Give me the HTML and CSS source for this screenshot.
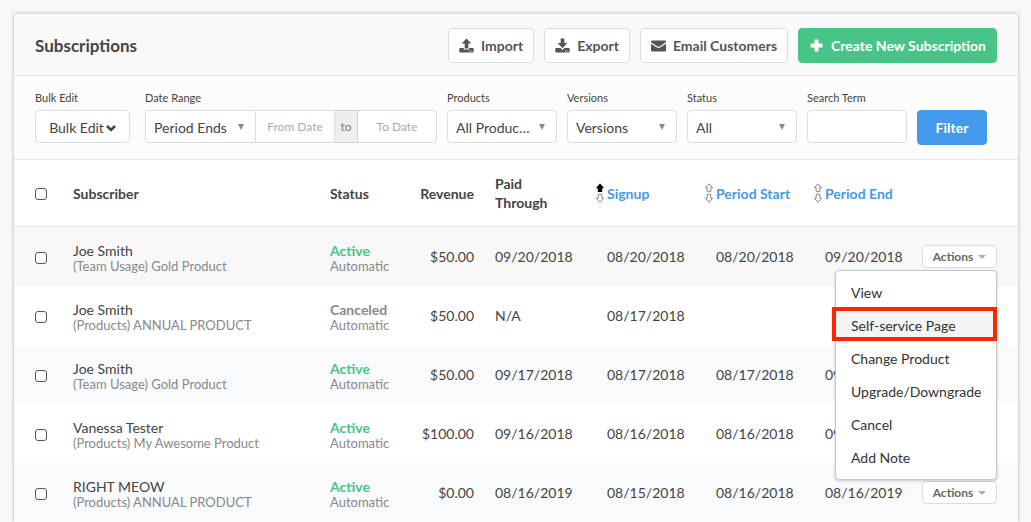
FILE: index.html
```html
<!DOCTYPE html>
<html lang="en">
  <head>
    <meta charset="UTF-8" />
    <meta name="viewport" content="width=device-width, initial-scale=1.0" />
    <title>Subscriptions</title>
    <link rel="stylesheet" href="styles.css">
  </head>
  <body>
    <svg class="sprite" aria-hidden="true">
      <symbol id="icon-up" viewBox="0 0 15 15">
        <path d="M7.500 0.500L12.300 5.500H9.300V10.500H5.700V5.500H2.700Z" />
        <path d="M1 10H4.800V11.500H10.200V10H14Q14.700 10 14.700 11V13.800Q14.700 14.500 14 14.500H1Q0.300 14.500 0.300 13.800V11Q0.300 10 1 10ZM10 12.500V13.500H11V12.500ZM12.300 12.500V13.500H13.300V12.500Z" fill-rule="evenodd" />
      </symbol>
      <symbol id="icon-down" viewBox="0 0 15 15">
        <path d="M5.700 0.500H9.300V5H12.300L7.500 10.200L2.700 5H5.700Z" />
        <path d="M1 10H5.500L7.500 12L9.500 10H14Q14.700 10 14.700 11V13.800Q14.700 14.500 14 14.500H1Q0.300 14.500 0.300 13.800V11Q0.300 10 1 10ZM10 12.500V13.500H11V12.500ZM12.300 12.500V13.500H13.300V12.500Z" fill-rule="evenodd" />
      </symbol>
      <symbol id="icon-mail" viewBox="0 0 15 15">
        <path d="M1 2.500H14Q15 2.500 15 3.500V4.300L8.500 8.500Q7.500 9.100 6.500 8.500L0 4.300V3.500Q0 2.500 1 2.500Z" />
        <path d="M0 5.700L6 9.600Q7.500 10.400 9 9.600L15 5.700V12.500Q15 13.500 14 13.500H1Q0 13.500 0 12.500Z" />
      </symbol>
      <symbol id="icon-plus" viewBox="0 0 15 15">
        <path d="M5.500 1.500H9.500V5.500H13.500V9.500H9.500V13.500H5.500V9.500H1.500V5.500H5.500Z" />
      </symbol>
      <symbol id="icon-chevron" viewBox="0 0 10 8">
        <path d="M1 2L5 6L9 2" fill="none" stroke="currentColor" stroke-width="2.500" />
      </symbol>
      <symbol id="icon-sort" viewBox="0 0 10 20">
        <path class="sort-up" d="M5 0.800L8.700 4.800H6.800V8.700H3.200V4.800H1.300Z" />
        <path class="sort-down" d="M5 19.200L8.700 15.200H6.800V11.300H3.200V15.200H1.300Z" />
      </symbol>
      <symbol id="icon-sorted" viewBox="0 0 10 20">
        <path d="M5 0.500L9.200 5.200H7.200V9H2.800V5.200H0.800Z" fill="#000" />
        <path class="sort-down" d="M5 19.200L8.700 15.200H6.800V11.300H3.200V15.200H1.300Z" />
      </symbol>
    </svg>

    <main class="panel">
      <header class="panel-header">
        <h1>Subscriptions</h1>
        <div class="toolbar">
          <button class="btn" type="button"><svg class="icon"><use href="#icon-up" /></svg>Import</button>
          <button class="btn" type="button"><svg class="icon"><use href="#icon-down" /></svg>Export</button>
          <button class="btn" type="button"><svg class="icon"><use href="#icon-mail" /></svg>Email Customers</button>
          <button class="btn btn-green" type="button"><svg class="icon"><use href="#icon-plus" /></svg>Create New Subscription</button>
        </div>
      </header>

      <form class="filters">
        <div class="field field-bulk">
          <label for="bulk">Bulk Edit</label>
          <button class="control bulk" id="bulk" type="button">Bulk Edit<svg class="chevron"><use href="#icon-chevron" /></svg></button>
        </div>
        <div class="field">
          <label for="range">Date Range</label>
          <div class="range">
            <div class="select">
              <select class="control" id="range"><option>Period Ends</option></select>
            </div>
            <input class="control date" type="text" placeholder="From Date" aria-label="From Date" />
            <span class="range-to">to</span>
            <input class="control date" type="text" placeholder="To Date" aria-label="To Date" />
          </div>
        </div>
        <div class="field">
          <label for="products">Products</label>
          <div class="select">
            <select class="control" id="products"><option>All Products</option></select>
          </div>
        </div>
        <div class="field">
          <label for="versions">Versions</label>
          <div class="select">
            <select class="control" id="versions"><option>Versions</option></select>
          </div>
        </div>
        <div class="field">
          <label for="status">Status</label>
          <div class="select">
            <select class="control" id="status"><option>All</option></select>
          </div>
        </div>
        <div class="field">
          <label for="search">Search Term</label>
          <input class="control search" id="search" type="text" />
        </div>
        <button class="btn btn-blue" type="submit">Filter</button>
      </form>

      <table>
        <colgroup>
          <col class="col-check" />
          <col />
          <col class="col-status" />
          <col class="col-revenue" />
          <col class="col-paid" />
          <col class="col-date" />
          <col class="col-date" />
          <col class="col-date" />
          <col class="col-actions" />
        </colgroup>
        <thead>
          <tr>
            <th class="check"><input type="checkbox" aria-label="Select all" /></th>
            <th>Subscriber</th>
            <th>Status</th>
            <th class="revenue">Revenue</th>
            <th>Paid Through</th>
            <th><a class="sort" href="#"><svg><use href="#icon-sorted" /></svg>Signup</a></th>
            <th><a class="sort" href="#"><svg><use href="#icon-sort" /></svg>Period Start</a></th>
            <th><a class="sort" href="#"><svg><use href="#icon-sort" /></svg>Period End</a></th>
            <th></th>
          </tr>
        </thead>
        <tbody>
          <tr class="current">
            <td class="check"><input type="checkbox" aria-label="Select Joe Smith" /></td>
            <td class="stacked">Joe Smith<small>(Team Usage) Gold Product</small></td>
            <td class="stacked"><b class="active">Active</b><small>Automatic</small></td>
            <td class="revenue">$50.00</td>
            <td>09/20/2018</td>
            <td class="date-cell">08/20/2018</td>
            <td class="date-cell">08/20/2018</td>
            <td class="date-cell">09/20/2018</td>
            <td>
              <div class="dropdown">
                <button class="actions" type="button">Actions</button>
                <ul class="menu">
                  <li><a href="#">View</a></li>
                  <li class="highlight"><a href="#">Self-service Page</a></li>
                  <li><a href="#">Change Product</a></li>
                  <li><a href="#">Upgrade/Downgrade</a></li>
                  <li><a href="#">Cancel</a></li>
                  <li><a href="#">Add Note</a></li>
                </ul>
              </div>
            </td>
          </tr>
          <tr>
            <td class="check"><input type="checkbox" aria-label="Select Joe Smith" /></td>
            <td class="stacked">Joe Smith<small>(Products) ANNUAL PRODUCT</small></td>
            <td class="stacked"><b class="canceled">Canceled</b><small>Automatic</small></td>
            <td class="revenue">$50.00</td>
            <td>N/A</td>
            <td class="date-cell">08/17/2018</td>
            <td class="date-cell"></td>
            <td class="date-cell"></td>
            <td><button class="actions" type="button">Actions</button></td>
          </tr>
          <tr>
            <td class="check"><input type="checkbox" aria-label="Select Joe Smith" /></td>
            <td class="stacked">Joe Smith<small>(Team Usage) Gold Product</small></td>
            <td class="stacked"><b class="active">Active</b><small>Automatic</small></td>
            <td class="revenue">$50.00</td>
            <td>09/17/2018</td>
            <td class="date-cell">08/17/2018</td>
            <td class="date-cell">08/17/2018</td>
            <td class="date-cell">09/17/2018</td>
            <td><button class="actions" type="button">Actions</button></td>
          </tr>
          <tr>
            <td class="check"><input type="checkbox" aria-label="Select Vanessa Tester" /></td>
            <td class="stacked">Vanessa Tester<small>(Products) My Awesome Product</small></td>
            <td class="stacked"><b class="active">Active</b><small>Automatic</small></td>
            <td class="revenue">$100.00</td>
            <td>09/16/2018</td>
            <td class="date-cell">08/16/2018</td>
            <td class="date-cell">08/16/2018</td>
            <td class="date-cell">09/16/2018</td>
            <td><button class="actions" type="button">Actions</button></td>
          </tr>
          <tr>
            <td class="check"><input type="checkbox" aria-label="Select RIGHT MEOW" /></td>
            <td class="stacked">RIGHT MEOW<small>(Products) ANNUAL PRODUCT</small></td>
            <td class="stacked"><b class="active">Active</b><small>Automatic</small></td>
            <td class="revenue">$0.00</td>
            <td>08/16/2019</td>
            <td class="date-cell">08/15/2018</td>
            <td class="date-cell">08/16/2018</td>
            <td class="date-cell">08/16/2019</td>
            <td><button class="actions" type="button">Actions</button></td>
          </tr>
        </tbody>
      </table>
    </main>
  </body>
</html>
```
FILE: styles.css
```css
* {
  box-sizing: border-box;
}
body {
  margin: 0;
  padding: 14px 13px 0 14px;
  background: #f9f9f9;
  color: #444;
  font-family: Lato, sans-serif;
  font-size: 14px;
}
button,
input,
select {
  margin: 0;
  color: inherit;
  font-family: inherit;
  font-size: 14px;
}
a {
  color: inherit;
  text-decoration: none;
}
.sprite {
  display: none;
}
.panel {
  background: #fff;
  box-shadow: 0 0 4px rgba(0, 0, 0, 0.3);
}

/* header */
.panel-header {
  display: flex;
  align-items: center;
  justify-content: space-between;
  height: 62px;
  padding: 2px 21px 0;
  background: #f9f9f9;
  border-bottom: 1px solid #e3e3e3;
}
h1 {
  margin: 0;
  font-size: 17px;
}
.toolbar {
  display: flex;
  gap: 10px;
}
.btn {
  display: flex;
  align-items: center;
  gap: 7px;
  height: 35px;
  padding: 0 10px;
  background: #fff;
  border: 1px solid #dcdcdc;
  border-radius: 4px;
  color: #555;
  font-size: 14px;
  font-weight: bold;
}
.btn-green {
  background: #48c586;
  border-color: #48c586;
  color: #fff;
}
.btn-blue {
  justify-content: center;
  width: 70px;
  background: #4399eb;
  border-color: #4399eb;
  color: #fff;
}
.icon {
  width: 15px;
  height: 15px;
  fill: currentColor;
}

/* filters */
.filters {
  display: flex;
  align-items: flex-end;
  gap: 10px;
  height: 84px;
  padding: 0 21px 14px;
  background: #fcfcfc;
  border-bottom: 1px solid #e6e6e6;
}
.field {
  height: 55px;
}
.field-bulk {
  margin-right: 5px;
}
label {
  display: block;
  height: 20px;
  font-size: 11px;
  line-height: 16px;
}
.control {
  height: 33px;
  background: #fff;
  border: 1px solid #dcdcdc;
  border-radius: 4px;
}
.bulk {
  display: flex;
  align-items: center;
  justify-content: center;
  gap: 2px;
  width: 95px;
  padding: 2px 0 0;
}
.chevron {
  width: 10px;
  height: 8px;
}
.select {
  display: grid;
  align-items: center;
  width: 110px;
}
.select::after {
  content: "";
  grid-area: 1 / 1;
  justify-self: end;
  margin-right: 12px;
  border: 3px solid transparent;
  border-top: 6px solid #888;
  border-bottom: 0;
  pointer-events: none;
}
select.control {
  grid-area: 1 / 1;
  width: 100%;
  padding: 2px 26px 0 8px;
  appearance: none;
  text-overflow: ellipsis;
}
.range {
  display: flex;
}
.range .select {
  width: 111px;
}
.range .control {
  border-radius: 0;
}
.range select.control {
  border-radius: 4px 0 0 4px;
}
.range .date {
  width: 79px;
  border-left: 0;
  font-size: 12px;
  text-align: center;
}
.range .date:last-child {
  border-radius: 0 4px 4px 0;
}
.date::placeholder {
  color: #aaa;
}
.range-to {
  width: 23px;
  background: #eee;
  border: 1px solid #d2d2d2;
  border-left: 0;
  color: #777;
  font-size: 12px;
  line-height: 31px;
  text-align: center;
}
.search {
  width: 100px;
  padding: 0 8px;
}

/* table */
table {
  width: 100%;
  table-layout: fixed;
  border-collapse: separate;
  border-spacing: 0;
}
.col-check {
  width: 49px;
}
.col-status {
  width: 90px;
}
.col-revenue {
  width: 75px;
}
.col-paid {
  width: 100px;
}
.col-date {
  width: 109px;
}
.col-actions {
  width: 106px;
}
th,
td {
  height: 59px;
  padding: 0 10px;
  text-align: left;
}
th {
  height: 67px;
  border-bottom: 1px solid #dcdeea;
  line-height: 19px;
}
tbody tr:nth-child(odd) {
  background: #f9fafc;
}
tbody tr.current {
  background: #f8f8f8;
}
.check {
  padding: 2px 0 0 21px;
}
.check input {
  display: block;
  width: 12px;
  height: 12px;
  appearance: none;
  background: #fff;
  border: 1px solid #555;
  border-radius: 3px;
}
.revenue {
  padding-right: 11px;
  text-align: right;
}
.date-cell {
  padding: 0 0 0 22px;
}
.stacked {
  padding-top: 3px;
  line-height: 16px;
  white-space: nowrap;
}
.stacked small {
  display: block;
  color: #888;
  font-size: 13px;
  line-height: 15px;
}
.active {
  color: #48c586;
}
.canceled {
  color: #888;
}
.sort {
  display: flex;
  align-items: center;
  gap: 2px;
  color: #4399eb;
  white-space: nowrap;
}
.sort svg {
  flex: none;
  width: 10px;
  height: 20px;
}
.sort-up,
.sort-down {
  fill: #fff;
  stroke: #888;
}

/* row actions */
.dropdown {
  position: relative;
}
.actions {
  display: flex;
  align-items: center;
  justify-content: center;
  gap: 5px;
  width: 75px;
  height: 23px;
  padding: 0;
  background: #fff;
  border: 1px solid #dcdcdc;
  border-radius: 4px;
  color: #666;
  font-size: 12px;
  font-weight: bold;
}
.actions::after {
  content: "";
  border: 4px solid transparent;
  border-top-color: #aaa;
  border-bottom: 0;
}
.menu {
  position: absolute;
  z-index: 1;
  top: 25px;
  right: 11px;
  width: 162px;
  margin: 0;
  padding: 5px 0;
  list-style: none;
  background: #fff;
  border: 1px solid #c8c8c8;
  border-radius: 4px;
  box-shadow: 0 1px 3px rgba(0, 0, 0, 0.2);
}
.menu a {
  display: block;
  padding: 0 15px;
  color: #333;
  line-height: 33px;
}
.highlight {
  position: relative;
  background: #f4f4f4;
}
.highlight::after {
  content: "";
  position: absolute;
  inset: -2px -1px 1px -4px;
  border: 4px solid #ff2600;
}
```
